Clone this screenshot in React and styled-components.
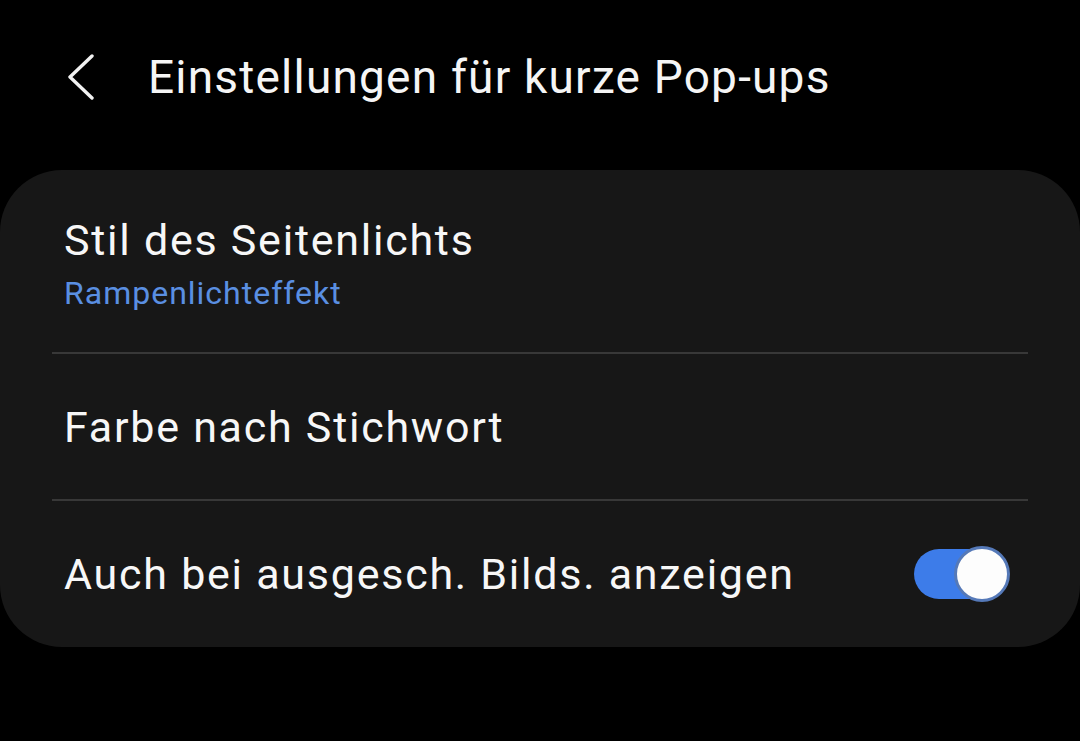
import React, { useState } from 'react';
import styled, { createGlobalStyle } from 'styled-components';

const GlobalStyle = createGlobalStyle`
  html, body {
    margin: 0;
    padding: 0;
    background: #000;
  }
  body {
    font-family: Roboto, "Noto Sans", sans-serif;
    color: #fafafa;
  }
`;

const Page = styled.div`
  width: 1080px;
  height: 741px;
  background: #000;
  overflow: hidden;
`;

const Header = styled.header`
  display: flex;
  align-items: center;
  height: 155px;
  padding: 0 0 2px 66px;
  box-sizing: border-box;
  gap: 52px;
`;

const BackButton = styled.button`
  display: flex;
  align-items: center;
  justify-content: center;
  width: 30px;
  height: 50px;
  padding: 0;
  border: none;
  background: none;
  cursor: pointer;
`;

const Title = styled.h1`
  margin: 0;
  font-size: 46px;
  font-weight: 400;
  color: #f5f5f5;
  letter-spacing: 1.2px;
`;

const Card = styled.section`
  margin-top: 15px;
  background: #171717;
  border-radius: 62px;
  padding: 0 52px;
`;

const Row = styled.div`
  display: flex;
  align-items: center;
  justify-content: space-between;
  min-height: ${(p) => p.$height}px;
  padding: ${(p) => p.$pad || '0 12px'};
  box-sizing: border-box;
  border-bottom: ${(p) => (p.$last ? 'none' : '2px solid #383838')};
`;

const TextBlock = styled.div`
  display: flex;
  flex-direction: column;
  gap: 8px;
`;

const Label = styled.div`
  font-size: 43px;
  line-height: 50px;
  letter-spacing: 1.75px;
  color: #f7f7f7;
`;

const Sub = styled.div`
  font-size: 32px;
  line-height: 40px;
  letter-spacing: 1px;
  color: #5a8fe2;
`;

const Track = styled.button`
  position: relative;
  width: 94px;
  height: 50px;
  margin-right: 8px;
  padding: 0;
  border: none;
  border-radius: 25px;
  background: ${(p) => (p.$on ? '#3d7ce9' : '#555')};
  cursor: pointer;
`;

const Thumb = styled.span`
  position: absolute;
  top: -3px;
  left: ${(p) => (p.$on ? '40px' : '-2px')};
  width: 50px;
  height: 50px;
  border-radius: 50%;
  background: #fdfdfd;
  border: 3px solid #5579b8;
`;

function Toggle() {
  const [on, setOn] = useState(true);
  return (
    <Track type="button" $on={on} onClick={() => setOn(!on)}>
      <Thumb $on={on} />
    </Track>
  );
}

export default function App() {
  return (
    <Page>
      <GlobalStyle />
      <Header>
        <BackButton type="button" aria-label="Zurück">
          <svg width="30" height="46" viewBox="0 0 30 46">
            <polyline points="26,2 4,23 26,44" fill="none" stroke="#f2f2f2" strokeWidth="3.4" strokeLinecap="round" strokeLinejoin="round" />
          </svg>
        </BackButton>
        <Title>Einstellungen für kurze Pop-ups</Title>
      </Header>
      <Card>
        <Row $height={183} $pad="45px 12px 39px">
          <TextBlock>
            <Label>Stil des Seitenlichts</Label>
            <Sub>Rampenlichteffekt</Sub>
          </TextBlock>
        </Row>
        <Row $height={147}>
          <Label>Farbe nach Stichwort</Label>
        </Row>
        <Row $height={146} $last>
          <Label>Auch bei ausgesch. Bilds. anzeigen</Label>
          <Toggle />
        </Row>
      </Card>
    </Page>
  );
}
